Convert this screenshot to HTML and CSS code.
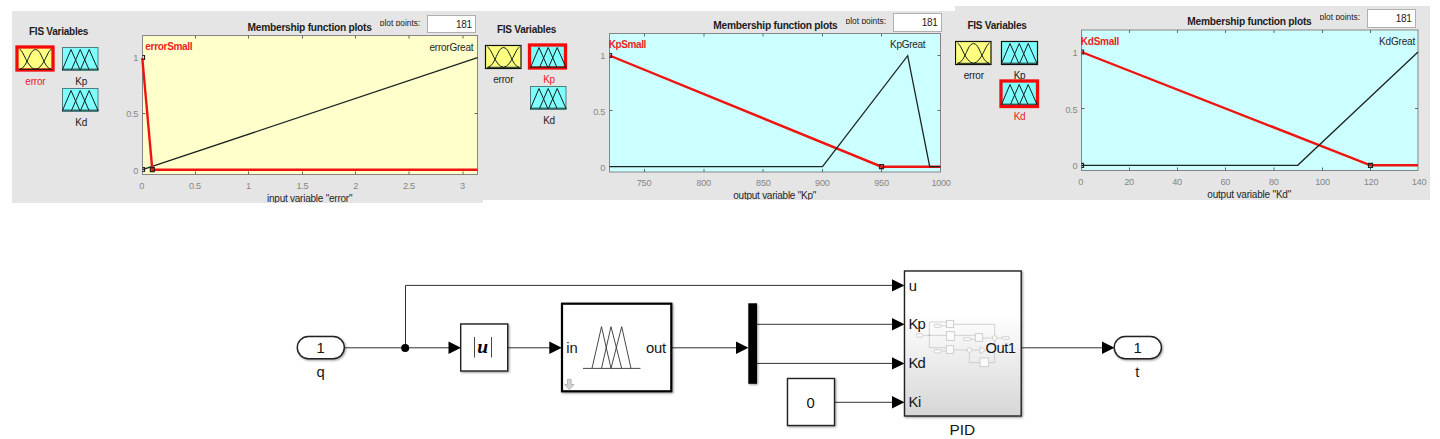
FILE: index.html
```html
<!DOCTYPE html>
<html lang="en">
<head>
<meta charset="utf-8">
<title>Fuzzy PID membership functions</title>
<link rel="stylesheet" href="styles.css">
</head>
<body>
<svg class="defs" width="0" height="0" aria-hidden="true">
  <defs>
    <g id="tri-curves">
      <path d="M.5 22.5 9 2.5 17.8 22.5M9.5 22.5 18.2 2.5 27 22.5M18.5 22.5 27.2 2.5 36 22.5M0 22.2H36.5"/>
    </g>
    <g id="bell-curves">
      <path d="M2.5 2C7 4 10 21 18.5 22.3M3 22.3C11 20 12 2.5 18.5 2.5S26 20 34 22.3M18.5 22.3C27 21 30 4 34.5 2M2 22.3H35"/>
    </g>
  </defs>
</svg>

<main class="page">
  <div class="panels">

    <section class="panel panel-error">
      <aside class="sidebar">
        <h2 class="side-title">FIS Variables</h2>
        <div class="vars">
          <div class="col">
            <svg class="tile input" viewBox="0 0 36.5 28"><g transform="translate(0 2)"><rect class="box selected" x="0" y="0" width="36" height="23"/><use href="#bell-curves"/></g></svg>
            <span class="name active">error</span>
          </div>
          <div class="col">
            <svg class="tile output" viewBox="0 0 36.5 28"><g transform="translate(0 2)"><rect class="box dim" x=".5" y=".5" width="35.5" height="23"/><use href="#tri-curves"/></g></svg>
            <span class="name">Kp</span>
            <svg class="tile output" viewBox="0 0 36.5 28"><g transform="translate(0 2)"><rect class="box dim" x=".5" y=".5" width="35.5" height="23"/><use href="#tri-curves"/></g></svg>
            <span class="name">Kd</span>
          </div>
        </div>
      </aside>
      <div class="plot">
        <header class="plot-head">
          <h2 class="plot-title">Membership function plots</h2>
          <span class="points-label">plot points:</span>
          <span class="points">181</span>
        </header>
        <svg class="chart" width="371" height="169" viewBox="112 34 371 169">
          <rect class="area yellow" x="142.5" y="35.5" width="335" height="139"/>
          <path class="ticks" d="M195.5 174.5v-3M248.5 174.5v-3M302.5 174.5v-3M355.5 174.5v-3M409 174.5v-3M463 174.5v-3M195.5 35.5v3M248.5 35.5v3M302.5 35.5v3M355.5 35.5v3M409 35.5v3M463 35.5v3M142.5 113.5h3M477.5 113.5h-3"/>
          <path class="mf" d="M142.5 169.7 477.5 57.7"/>
          <path class="mf red" d="M142.3 58 152.3 169.7H477.5"/>
          <path class="mark" d="M142.5 55.5h2v4h-2M142.5 167.5h2v4h-2M150.3 167.7h4v4h-4z"/>
          <g class="tick-text end"><text x="138" y="61.3">1</text><text x="138" y="117.3">0.5</text><text x="138" y="173.6">0</text></g>
          <g class="tick-text"><text x="141.7" y="188.8">0</text><text x="195" y="188.8">0.5</text><text x="248.5" y="188.8">1</text><text x="302.5" y="188.8">1.5</text><text x="355.7" y="188.8">2</text><text x="409" y="188.8">2.5</text><text x="462.5" y="188.8">3</text></g>
          <text class="small" x="145.3" y="50.3" textLength="47.3">errorSmall</text>
          <text class="great" x="429.5" y="50.5" textLength="44">errorGreat</text>
          <text class="great" x="267" y="202.3" textLength="85.5">input variable "error"</text>
        </svg>
      </div>
    </section>

    <section class="panel panel-kp">
      <aside class="sidebar">
        <h2 class="side-title">FIS Variables</h2>
        <div class="vars">
          <div class="col">
            <svg class="tile input" viewBox="0 0 36.5 28"><g transform="translate(0 2)"><rect class="box" x=".5" y=".5" width="35.5" height="23"/><use href="#bell-curves"/></g></svg>
            <span class="name">error</span>
          </div>
          <div class="col">
            <svg class="tile output" viewBox="0 0 36.5 28"><g transform="translate(0 2)"><rect class="box selected" x="-.5" y="0" width="36" height="23"/><use href="#tri-curves"/></g></svg>
            <span class="name active">Kp</span>
            <svg class="tile output" viewBox="0 0 36.5 28"><g transform="translate(0 2)"><rect class="box dim" x=".5" y=".5" width="35.5" height="23"/><use href="#tri-curves"/></g></svg>
            <span class="name">Kd</span>
          </div>
        </div>
      </aside>
      <div class="plot">
        <header class="plot-head">
          <h2 class="plot-title">Membership function plots</h2>
          <span class="points-label">plot points:</span>
          <span class="points">181</span>
        </header>
        <svg class="chart" width="372" height="168" viewBox="583 32 372 168">
          <rect class="area cyan" x="609.5" y="33.5" width="331" height="138.5"/>
          <path class="ticks" d="M644.5 172v-3M704 172v-3M763 172v-3M822.5 172v-3M881.5 172v-3M644.5 33.5v3M704 33.5v3M763 33.5v3M822.5 33.5v3M881.5 33.5v3M609.5 110.5h3M940.5 110.5h-3M940.5 55.5h-3"/>
          <path class="mf red" d="M609.5 55.5 881.5 166.7H940.5"/>
          <path class="mf" d="M609.5 166.7H822.5L907.7 55.7 929.7 166.7H940.5"/>
          <path class="mark" d="M609.5 53.5h2v4h-2M879.5 164.7h4v4h-4z"/>
          <g class="tick-text end"><text x="605" y="59.3">1</text><text x="605" y="115.2">0.5</text><text x="605" y="171">0</text></g>
          <g class="tick-text"><text x="644" y="186.3">750</text><text x="703.7" y="186.3">800</text><text x="763.3" y="186.3">850</text><text x="822.3" y="186.3">900</text><text x="881.5" y="186.3">950</text><text x="941" y="186.3">1000</text></g>
          <text class="small" x="608.7" y="48.2" textLength="37.6">KpSmall</text>
          <text class="great" x="890" y="48.2" textLength="35.5">KpGreat</text>
          <text class="great" x="733.3" y="199.2" textLength="83">output variable "Kp"</text>
        </svg>
      </div>
    </section>

    <section class="panel panel-kd">
      <aside class="sidebar">
        <h2 class="side-title">FIS Variables</h2>
        <div class="vars">
          <div class="col">
            <svg class="tile input" viewBox="0 0 36.5 28"><g transform="translate(0 2)"><rect class="box" x=".5" y=".5" width="35.5" height="23"/><use href="#bell-curves"/></g></svg>
            <span class="name">error</span>
          </div>
          <div class="col">
            <svg class="tile output" viewBox="0 0 36.5 28"><g transform="translate(0 2)"><rect class="box" x=".5" y=".5" width="36" height="23"/><use href="#tri-curves"/></g></svg>
            <span class="name">Kp</span>
            <svg class="tile output" viewBox="0 0 36.5 28"><g transform="translate(0 2)"><rect class="box selected" x="0" y="-1" width="36.5" height="25.5"/><use href="#tri-curves"/></g></svg>
            <span class="name active">Kd</span>
          </div>
        </div>
      </aside>
      <div class="plot">
        <header class="plot-head">
          <h2 class="plot-title">Membership function plots</h2>
          <span class="points-label">plot points:</span>
          <span class="points">181</span>
        </header>
        <svg class="chart" width="375" height="172" viewBox="1055 28 375 172">
          <rect class="area cyan" x="1081.5" y="30" width="336.5" height="140.5"/>
          <path class="ticks" d="M1129.5 170.5v-3M1177.5 170.5v-3M1225.5 170.5v-3M1274 170.5v-3M1322.5 170.5v-3M1370.5 170.5v-3M1129.5 30v3M1177.5 30v3M1225.5 30v3M1274 30v3M1322.5 30v3M1370.5 30v3M1081.5 108.5h3M1418 108.5h-3"/>
          <path class="mf red" d="M1081.5 52 1370.5 165.3H1418"/>
          <path class="mf" d="M1081.5 165.3H1297.7L1418 52"/>
          <path class="mark" d="M1081.5 50h2v4h-2M1081.5 163.3h2v4h-2M1368.5 163.3h4v4h-4z"/>
          <g class="tick-text end"><text x="1077.3" y="56">1</text><text x="1077.3" y="112.6">0.5</text><text x="1077.3" y="169.3">0</text></g>
          <g class="tick-text"><text x="1080.7" y="185">0</text><text x="1129" y="185">20</text><text x="1177" y="185">40</text><text x="1225.3" y="185">60</text><text x="1273.7" y="185">80</text><text x="1322.5" y="185">100</text><text x="1371" y="185">120</text><text x="1419" y="185">140</text></g>
          <text class="small" x="1080.8" y="45.2" textLength="38.5">KdSmall</text>
          <text class="great" x="1379" y="45.2" textLength="36.3">KdGreat</text>
          <text class="great" x="1207.3" y="198.3" textLength="84">output variable "Kd"</text>
        </svg>
      </div>
    </section>
  </div>

  <svg class="diagram" width="1440" height="236" viewBox="0 203 1440 236">
    <defs>
      <linearGradient id="pid-fill" x1="0" y1="0" x2="0" y2="1">
        <stop offset=".3" stop-color="#fff"/>
        <stop offset="1" stop-color="#d6d6d6"/>
      </linearGradient>
    </defs>

    <g class="wire">
      <path d="M344 347.8H450M405.5 347.8V285.4H894M508 347.8H551M672 347.8H738M757 324.3H894M757 363.4H894M835 402.3H894M1022 347.8H1104"/>
    </g>
    <circle cx="405.2" cy="348" r="4"/>
    <path d="M448.5 341.6 461 347.8 448.5 354zM549.3 341.6 561.8 347.8 549.3 354zM736 341.6 748.5 347.8 736 354zM892 279.2 904.5 285.4 892 291.6zM892 318.1 904.5 324.3 892 330.5zM892 357.2 904.5 363.4 892 369.6zM892 396.1 904.5 402.3 892 408.5zM1102 341.6 1114.5 347.8 1102 354z"/>

    <g class="block">
      <rect x="297.3" y="336.5" width="47" height="22.2" rx="11.1"/>
      <rect x="460.7" y="324" width="47" height="47"/>
      <rect class="thick" x="562" y="303.7" width="109.3" height="87.6"/>
      <rect class="solid" x="748.3" y="303.3" width="8.7" height="80.5"/>
      <rect x="787.5" y="378.5" width="47" height="47"/>
      <rect class="pid" x="904.5" y="271" width="116.7" height="145"/>
      <rect x="1114.2" y="336.5" width="47.2" height="22.2" rx="11.1"/>
    </g>

    <path class="thin" d="M474.5 337v20.5M491.5 337v20.5"/>
    <text class="abs" x="482.8" y="353.3">u</text>
    <path class="thin" d="M583 368.4H640.5M592 368.4 601.5 326.7 611 368.4M601.5 368.4 611 326.7 621.7 368.4M611 368.4 621.7 326.7 631 368.4"/>
    <path class="link" d="M567.5 379.3h3.6v5.2h2.8l-4.6 5-4.6-5h2.8z"/>

    <g class="inner" transform="translate(780 260) scale(.33333)">
      <path d="M429 226H586M499 186H448V263H499M484 197H499M521 193H644V227M573 238H586M608 234H637M651 234H666M484 273H499M521 270H561M575 270H600M568 277V308H600M626 308H644V241"/>
      <rect x="409" y="220" width="20" height="12" rx="6"/>
      <rect x="462" y="193" width="22" height="9" rx="4.5"/>
      <rect x="462" y="269" width="22" height="10" rx="5"/>
      <rect x="550" y="233" width="23" height="9" rx="4.5"/>
      <rect x="666" y="230" width="22" height="8" rx="4"/>
      <rect x="499" y="181" width="22" height="22"/>
      <rect x="499" y="215" width="25" height="26"/>
      <rect x="499" y="257" width="22" height="23"/>
      <rect x="586" y="221" width="22" height="23"/>
      <rect x="600" y="294" width="26" height="26"/>
      <circle cx="644" cy="234" r="7"/>
      <circle cx="568" cy="270" r="7"/>
      <path d="M600 260 618 270.5 600 281z"/>
      <circle class="dot" cx="448" cy="226" r="2"/>
    </g>

    <g class="port">
      <text x="566.3" y="352.8">in</text>
      <text x="646" y="352.8" textLength="20">out</text>
      <text x="908.7" y="290.5">u</text>
      <text x="908.5" y="329.3" textLength="17.3">Kp</text>
      <text x="908.5" y="368.3" textLength="17.3">Kd</text>
      <text x="908.5" y="407.3" textLength="12.8">Ki</text>
      <text x="985.5" y="352.8" textLength="30.5">Out1</text>
    </g>
    <g class="port mid">
      <text x="320.5" y="353.3">1</text>
      <text x="320.5" y="376.7">q</text>
      <text x="810.7" y="407.7">0</text>
      <text x="1137.5" y="353.3">1</text>
      <text x="1137.3" y="376.7">t</text>
      <text class="caption" x="962.3" y="434.7">PID</text>
    </g>
  </svg>
</main>
</body>
</html>
```
FILE: styles.css
```css
* { box-sizing: border-box; }

body {
  margin: 0;
  background: #fff;
  font-family: "Liberation Sans", Arial, sans-serif;
  color: #1c1c1c;
  overflow: hidden;
}

h2 { margin: 0; }
svg { display: block; }
.defs { display: none; }

.page {
  display: flex;
  flex-direction: column;
  width: 1440px;
  height: 439px;
}

.panels {
  display: flex;
  align-items: flex-start;
  height: 203px;
  padding-left: 12px;
}

.panel {
  display: flex;
  background: #e5e5e5;
  overflow: hidden;
}

.panel-error { width: 471px; height: 192px; margin-top: 11px; }
.panel-kp { width: 472px; height: 189px; margin-top: 11px; }
.panel-kd { width: 475px; height: 194px; margin-top: 6px; }

/* Variable list */
.sidebar { flex: none; width: 100px; }
.panel-error .sidebar { padding: 14.6px 0 0 4.6px; }
.panel-kp .sidebar { padding: 12.9px 0 0 1.5px; }
.panel-kd .sidebar { padding: 13.9px 0 0 0; }

.side-title {
  padding-left: 12.4px;
  font-size: 10px;
  letter-spacing: -.24px;
  line-height: 12px;
  white-space: nowrap;
}

.vars {
  display: flex;
  gap: 9.3px;
  margin-top: 7.6px;
}

.col {
  display: flex;
  flex-direction: column;
  align-items: center;
  width: 36.5px;
}

.tile {
  width: 36.5px;
  height: 28px;
  overflow: visible;
  fill: none;
  stroke: #10201c;
  stroke-width: 1;
}

.box { stroke: #111; stroke-width: 1.2; }
.box.dim { stroke: #4d7f80; stroke-width: 1; }
.box.selected { stroke: #f50a0a; stroke-width: 3.3; }
.input .box { fill: #ffff80; }
.output .box { fill: #80ffff; }

.name {
  font-size: 10px;
  letter-spacing: -.2px;
  line-height: 12.6px;
  padding: 3px 0 0 1px;
  margin-bottom: -3px;
}

.active { color: #f01818; }

/* Plot header */
.plot { flex: 1; min-width: 0; }

.plot-head {
  display: flex;
  align-items: flex-start;
}

.panel-error .plot-head { height: 23px; padding: 3.5px 0 0 135.5px; }
.panel-kp .plot-head { height: 21px; padding: 2px 0 0 130.3px; }
.panel-kd .plot-head { height: 22px; padding: 3px 0 0 132.3px; }

.plot-title {
  flex: none;
  width: 132.3px;
  margin-top: 7.2px;
  font-size: 10.2px;
  letter-spacing: -.24px;
  line-height: 12px;
  white-space: nowrap;
}

.points-label {
  flex: none;
  width: 47px;
  height: 7.9px;
  margin-top: 3.4px;
  overflow: hidden;
  font-size: 8.4px;
  line-height: 10px;
  white-space: nowrap;
}

.points {
  flex: none;
  width: 49px;
  height: 18.5px;
  padding-right: 3px;
  border: 1px solid #b0b0b0;
  background: #fff;
  font-size: 10px;
  letter-spacing: -.3px;
  line-height: 18px;
  text-align: right;
}

/* Charts */
.area { stroke: #858585; stroke-width: 1; }
.yellow { fill: #ffffcc; }
.cyan { fill: #ccffff; }
.ticks { fill: none; stroke: #666; stroke-width: 1; }
.mf { fill: none; stroke: #1c2420; stroke-width: 1.3; }
.mf.red { stroke: #ee1410; stroke-width: 2.4; }
.mark { fill: none; stroke: #222; stroke-width: 1.2; }
.tick-text { fill: #858585; font-size: 9.2px; letter-spacing: -.3px; text-anchor: middle; }
.tick-text.end { text-anchor: end; }
.small { fill: #ee1c1c; font-size: 10px; font-weight: bold; }
.great { fill: #262626; font-size: 10px; }

/* Block diagram */
.diagram { fill: #000; }
.wire path { fill: none; stroke: #333; stroke-width: 1; }
.block rect {
  fill: #fff;
  stroke: #222;
  stroke-width: 1.4;
  filter: drop-shadow(1.2px 1.4px 1px rgba(0, 0, 0, .4));
}
.block .thick { stroke: #000; stroke-width: 2.2; }
.block .solid { fill: #000; stroke: none; }
.block .pid { fill: url(#pid-fill); }
.thin { fill: none; stroke: #333; stroke-width: .9; }
.link { fill: #d4d4d4; stroke: #aaa; stroke-width: .8; }
.abs {
  font-family: "Liberation Serif", "Times New Roman", serif;
  font-size: 19.5px;
  font-style: italic;
  font-weight: bold;
  text-anchor: middle;
}
.inner { fill: #fafafa; stroke: #c2c2c2; stroke-width: 2.2; }
.inner path:first-child { fill: none; }
.inner .dot { fill: #999; }
.port { fill: #151515; font-size: 14.8px; }
.mid { text-anchor: middle; }
.caption { font-size: 15.4px; }
```
